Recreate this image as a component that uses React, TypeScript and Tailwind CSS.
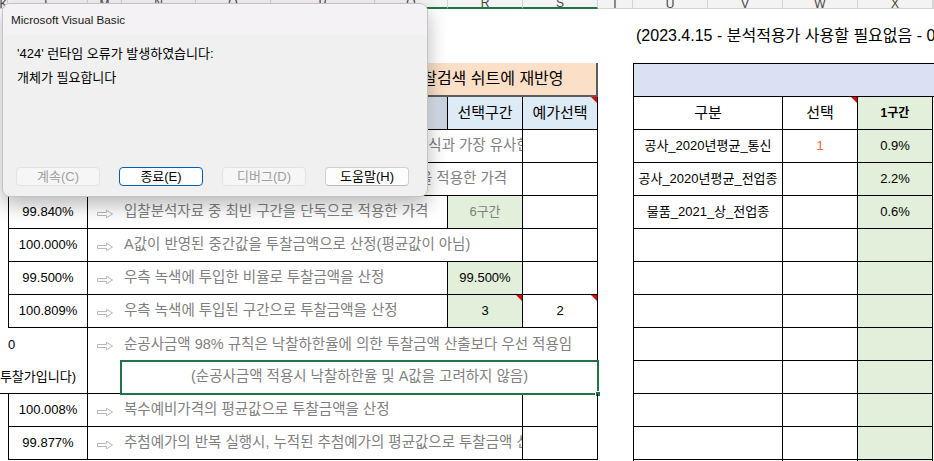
import type { ReactNode } from 'react';

type Letter = { key: string; picked?: boolean };

const letters: Letter[] = [
  { key: 'K' },
  { key: 'L' },
  { key: 'M' },
  { key: 'N', picked: true },
  { key: 'O', picked: true },
  { key: 'P', picked: true },
  { key: 'Q', picked: true },
  { key: 'R', picked: true },
  { key: 'S', picked: true },
  { key: 'T' },
  { key: 'U' },
  { key: 'V' },
  { key: 'W' },
  { key: 'X' },
  { key: 'Y' },
];

const groups = [
  { row: 'row-start-5', name: '공사_2020년평균_통신', sel: '1', rate: '0.9%' },
  { row: 'row-start-6', name: '공사_2020년평균_전업종', sel: '', rate: '2.2%' },
  { row: 'row-start-7', name: '물품_2021_상_전업종', sel: '', rate: '0.6%' },
  { row: 'row-start-8', name: '', sel: '', rate: '' },
  { row: 'row-start-9', name: '', sel: '', rate: '' },
  { row: 'row-start-10', name: '', sel: '', rate: '' },
  { row: 'row-start-11', name: '', sel: '', rate: '' },
  { row: 'row-start-12', name: '', sel: '', rate: '' },
  { row: 'row-start-13', name: '', sel: '', rate: '' },
  { row: 'row-start-14', name: '', sel: '', rate: '' },
  { row: 'row-start-15', name: '', sel: '', rate: '' },
];

// outlined "⇨" used in front of every method description
function Arrow() {
  return (
    <svg width="18" height="10" viewBox="0 0 18 10" className="shrink-0">
      <path
        d="M1.5 3.5H10.5V1.2L16.5 5L10.5 8.8V6.5H1.5Z"
        fill="none"
        stroke="#b8b8b8"
        strokeWidth="1"
      />
    </svg>
  );
}

// red comment marker in the top-right corner of a cell
function Flag() {
  return (
    <span className="absolute right-0 top-0 h-0 w-0 border-l-[6px] border-t-[6px] border-l-transparent border-t-[#e00000]" />
  );
}

interface MethodRowProps {
  row: string;
  rate?: string;
  text: string;
  pick?: ReactNode;
  pickMuted?: boolean;
  pickFlag?: boolean;
  est?: ReactNode;
  estFlag?: boolean;
}

function MethodRow({ row, rate, text, pick, pickMuted, pickFlag, est, estFlag }: MethodRowProps) {
  const hasPick = pick !== undefined;
  return (
    <>
      <div className={`${row} col-start-2 flex items-center justify-center border-x border-b border-black text-[13px]`}>
        {rate}
      </div>
      <div className={`${row} col-start-3 flex items-center justify-center border-b border-black pt-[3px]`}>
        <Arrow />
      </div>
      <div
        className={`${row} col-start-4 ${hasPick ? 'col-span-4' : 'col-span-5'} flex items-center overflow-hidden whitespace-nowrap border-r border-b border-black pl-[2px] text-[14.5px] text-[#808080]`}
      >
        {text}
      </div>
      {hasPick && (
        <div
          className={`${row} relative col-start-8 flex items-center justify-center border-r border-b border-black bg-[#e2efda] text-[13px] ${pickMuted ? 'text-[#808080]' : ''}`}
        >
          {pick}
          {pickFlag && <Flag />}
        </div>
      )}
      <div className={`${row} relative col-start-9 flex items-center justify-center border-r border-b border-black text-[13px]`}>
        {est}
        {estFlag && <Flag />}
      </div>
    </>
  );
}

function DialogButton({ label, state }: { label: string; state: 'off' | 'focus' | 'on' }) {
  const look =
    state === 'off'
      ? 'border-[#e3e3e3] bg-[#f6f6f6] text-[#a0a0a0]'
      : state === 'focus'
        ? 'border-[#005fb8] bg-white text-black'
        : 'border-[#d0d0d0] border-b-[#b8b8b8] bg-[#fdfdfd] text-black';
  return (
    <div className={`flex h-[19px] w-[84px] items-center justify-center rounded-[4px] border text-[13px] ${look}`}>
      {label}
    </div>
  );
}

export default function App() {
  return (
    <div className="relative h-[461px] w-[934px] overflow-hidden bg-white font-['Liberation_Sans','Noto_Sans_CJK_KR',sans-serif] text-black">
      <div className="grid grid-cols-[8px_80px_34px_74px_75px_104px_73px_75px_75px_35px_75px_75px_75px_75px_1fr] grid-rows-[9px_54px_34px_repeat(12,33px)]">
        {/* column letters */}
        {letters.map((l) => (
          <div
            key={l.key}
            className={
              l.picked
                ? 'row-start-1 flex items-end justify-center overflow-hidden border-r border-b-2 border-r-[#d4d4d4] border-b-[#217346] bg-[#f3f3f3] text-[12px] leading-[12px] text-[#444]'
                : 'row-start-1 flex items-end justify-center overflow-hidden border-r border-b border-[#d4d4d4] bg-[#f3f3f3] text-[12px] leading-[12px] text-[#444]'
            }
          >
            <span className="translate-y-[2px]">{l.key}</span>
          </div>
        ))}

        {/* note line */}
        <div className="col-start-11 col-span-5 row-start-2 flex items-center overflow-hidden whitespace-nowrap pl-[3px] text-[16px]">
          (2023.4.15 - 분석적용가 사용할 필요없음 - 0원 입력)
        </div>

        {/* button bar + group title bar */}
        <div className="col-start-7 col-span-3 row-start-3 flex items-center justify-center border-r-2 border-b-2 border-[#5c5c5c] bg-[#fbdfc6] text-[16px] whitespace-nowrap">
          투찰검색 쉬트에 재반영
        </div>
        <div className="col-start-11 col-span-5 row-start-3 border-t border-l border-b border-black bg-[#d9e1f2]" />

        {/* left header */}
        <div className="col-start-2 col-span-5 row-start-4 border-l border-r border-b border-black bg-[#ddebf7]" />
        <div className="col-start-7 row-start-4 border-r border-b border-black bg-[linear-gradient(90deg,#dde7f1_0%,#e3e9ef_70%,#c4d2e0_100%)]" />
        <div className="col-start-8 row-start-4 flex items-center justify-center border-r border-b border-black bg-[#ddebf7] text-[15px]">
          선택구간
        </div>
        <div className="relative col-start-9 row-start-4 flex items-center justify-center border-r border-b border-black bg-[#ddebf7] text-[15px]">
          예가선택
          <Flag />
        </div>

        {/* right header */}
        <div className="col-start-11 col-span-2 row-start-4 flex items-center justify-center border-l border-r border-b border-black text-[15px]">
          구분
        </div>
        <div className="relative col-start-13 row-start-4 flex items-center justify-center border-r border-b border-black text-[15px]">
          선택
          <Flag />
        </div>
        <div className="col-start-14 row-start-4 flex items-center justify-center border-r border-b border-black bg-[#e2efda] text-[12px] font-bold">
          1구간
        </div>

        {/* methods */}
        <MethodRow row="row-start-5" rate="100.120%" text="입찰분석자료 낙찰 분포를 반영해 산출한 조달청 방식과 가장 유사한 가격" />
        <MethodRow row="row-start-6" rate="99.910%" text="입찰분석자료 중 최빈 구간과 차빈 구간 평균 비율을 적용한 가격" />
        <MethodRow row="row-start-7" rate="99.840%" text="입찰분석자료 중 최빈 구간을 단독으로 적용한 가격" pick="6구간" pickMuted />
        <MethodRow row="row-start-8" rate="100.000%" text="A값이 반영된 중간값을 투찰금액으로 산정(평균값이 아님)" />
        <MethodRow row="row-start-9" rate="99.500%" text="우측 녹색에 투입한 비율로 투찰금액을 산정" pick="99.500%" />
        <MethodRow row="row-start-10" rate="100.809%" text="우측 녹색에 투입된 구간으로 투찰금액을 산정" pick="3" pickFlag est="2" estFlag />

        {/* net construction cost rule, two lines */}
        <div className="col-start-1 col-span-2 row-start-11 row-span-2 flex flex-col border-r border-b border-black text-[13px]">
          <div className="flex h-[33px] items-center pl-[8px]">0</div>
          <div className="flex h-[33px] items-center justify-end overflow-hidden whitespace-nowrap pr-[11px]">
            (순공사 98% 투찰가입니다)
          </div>
        </div>
        <div className="col-start-3 row-start-11 flex items-center justify-center pt-[3px]">
          <Arrow />
        </div>
        <div className="col-start-4 col-span-6 row-start-11 flex items-center overflow-hidden whitespace-nowrap border-r border-black pl-[2px] text-[14.5px] text-[#808080]">
          순공사금액 98% 규칙은 낙찰하한율에 의한 투찰금액 산출보다 우선 적용임
        </div>
        <div className="col-start-3 row-start-12 border-b border-black" />
        <div className="relative col-start-4 col-span-6 row-start-12 flex items-center justify-center whitespace-nowrap border-r border-b border-black text-[14.5px] text-[#808080]">
          (순공사금액 적용시 낙찰하한율 및 A값을 고려하지 않음)
          <span className="absolute -bottom-[2px] -left-[2px] -right-[2px] -top-[1px] border-2 border-[#217346]" />
          <span className="absolute -bottom-[4px] -right-[4px] h-[6px] w-[6px] border border-white bg-[#217346]" />
        </div>

        <MethodRow row="row-start-13" rate="100.008%" text="복수예비가격의 평균값으로 투찰금액을 산정" />
        <MethodRow row="row-start-14" rate="99.877%" text="추첨예가의 반복 실행시, 누적된 추첨예가의 평균값으로 투찰금액 산정" />

        {/* group table */}
        {groups.map((g) => (
          <div key={g.row} className="contents">
            <div className={`${g.row} col-start-11 col-span-2 flex items-center justify-center whitespace-nowrap border-l border-r border-b border-black text-[13px]`}>
              {g.name}
            </div>
            <div className={`${g.row} col-start-13 flex items-center justify-center border-r border-b border-black text-[13px] text-[#f26a35]`}>
              {g.sel}
            </div>
            <div className={`${g.row} col-start-14 flex items-center justify-center border-r border-b border-black bg-[#e2efda] text-[13px]`}>
              {g.rate}
            </div>
          </div>
        ))}
      </div>

      {/* runtime error box */}
      <div className="absolute left-[2px] top-[3px] flex h-[194px] w-[426px] flex-col overflow-hidden rounded-[8px] border border-[#c4c4c4] bg-[#f0f0f0] font-['Liberation_Sans','Noto_Sans_CJK_KR',sans-serif] shadow-[0_8px_20px_rgba(0,0,0,0.28)]">
        <div className="flex h-[31px] shrink-0 items-center bg-[#f4f2f4] pl-[8px] text-[11.7px] text-[#1a1a1a]">
          Microsoft Visual Basic
        </div>
        <div className="flex flex-col gap-[8px] px-[14px] pt-[11px] text-[13px] leading-[16px]">
          <p>'424' 런타임 오류가 발생하였습니다:</p>
          <p>개체가 필요합니다</p>
        </div>
        <div className="mt-auto flex gap-[19px] pb-[10px] pl-[13px]">
          <DialogButton label="계속(C)" state="off" />
          <DialogButton label="종료(E)" state="focus" />
          <DialogButton label="디버그(D)" state="off" />
          <DialogButton label="도움말(H)" state="on" />
        </div>
      </div>
    </div>
  );
}
